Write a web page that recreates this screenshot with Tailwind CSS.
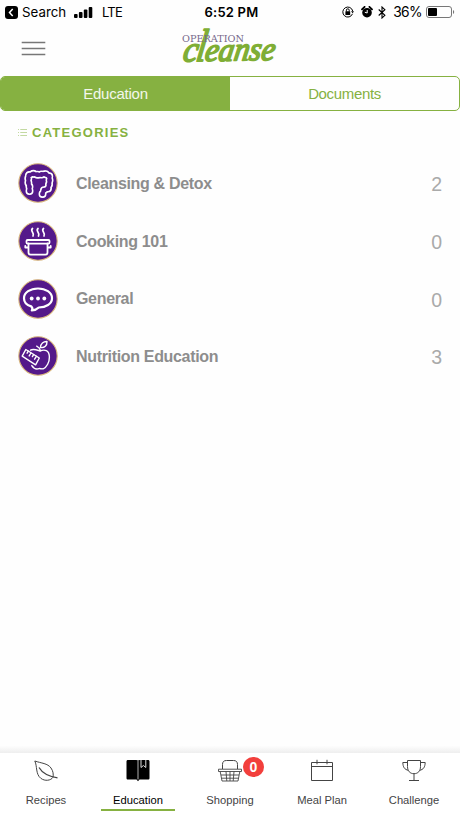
<!DOCTYPE html>
<html lang="en">

<head>
    <meta charset="UTF-8">
    <meta name="viewport" content="width=device-width, initial-scale=1.0">
    <title>Operation Cleanse - Education</title>
    <script src="https://cdn.jsdelivr.net/npm/@tailwindcss/browser@4"></script>
</head>

<body class="bg-[#fefefe] h-screen flex flex-col overflow-hidden font-['Liberation_Sans',sans-serif]">
    <!-- Status bar -->
    <div class="h-6 shrink-0 grid grid-cols-[1fr_auto_1fr] items-center pl-[5px] pr-[5px] text-black font-['Inter',sans-serif] text-[13.5px] leading-6">
        <div class="flex items-center">
            <svg class="w-[13px] h-[13px]" viewBox="0 0 13 13">
                <rect width="13" height="13" rx="3" />
                <path d="M7.7 3 4.5 6.5l3.2 3.5" fill="none" stroke="#fff" stroke-width="1.5" />
            </svg>
            <span class="ml-[4px] w-[44px] text-[13.3px] whitespace-nowrap">Search</span>
            <svg class="ml-[8px] w-[19px] h-[11px]" viewBox="0 0 19 11">
                <rect x="0" y="7" width="3.6" height="4" rx="1" />
                <rect x="4.9" y="5" width="3.6" height="6" rx="1" />
                <rect x="9.8" y="2.5" width="3.6" height="8.5" rx="1" />
                <rect x="14.7" y="0" width="3.6" height="11" rx="1" />
            </svg>
            <span class="ml-[9px] text-[13px] tracking-[-0.8px]">LTE</span>
        </div>
        <div class="font-semibold text-[13px] tracking-[0.2px] pl-[3px]">6:52 PM</div>
        <div class="flex items-center justify-end">
            <svg class="w-[12px] h-[12px]" viewBox="0 0 12 12" fill="none" stroke="#000">
                <path d="M10.5 7.8A5 5 0 1 1 10.7 5" stroke-width="1" />
                <path d="M9 5.2h3L10.6 7.3z" fill="#000" stroke="none" />
                <rect x="3.4" y="5.2" width="4.8" height="3.7" rx=".5" fill="#000" stroke="none" />
                <path d="M4.4 5.5V4.2a1.4 1.4 0 0 1 2.8 0v1.3" />
            </svg>
            <svg class="ml-[7px] w-[12px] h-[12px]" viewBox="0 0 12 12">
                <circle cx="6" cy="6.7" r="4.8" />
                <path d="M1 3.4 3.6.8M8.4.8 11 3.4" stroke="#000" stroke-width="1.8" stroke-linecap="round" />
                <path d="M6.2 4v3L3.8 6.2" fill="none" stroke="#fff" stroke-width="1" />
            </svg>
            <svg class="ml-[5px] w-[8px] h-[13px]" viewBox="0 0 8 13">
                <path d="m.7 3.5 6.2 5.8L4 12V1l2.9 2.7L.7 9.5" fill="none" stroke="#000" stroke-width="1.1" />
            </svg>
            <span class="ml-[7px] text-[13.8px] tracking-[-0.6px]">36%</span>
            <svg class="ml-[4px] w-[29px] h-[12px]" viewBox="0 0 29 12">
                <rect x=".5" y=".5" width="25" height="11" rx="2.5" fill="none" stroke="#777" />
                <rect x="2" y="2" width="9" height="8" rx="1" />
                <path d="M27 4c1.6.6 1.6 3.4 0 4z" fill="#777" />
            </svg>
        </div>
    </div>

    <!-- Header -->
    <div class="h-[52px] shrink-0 grid grid-cols-[1fr_96px_1fr]">
        <svg class="ml-[21px] mt-[16px] w-[25px] h-[17px]" viewBox="0 0 25 17">
            <path d="M.7 2.5h23.6M.7 8.5h23.6M.7 14.5h23.6" stroke="#777" stroke-width="1.6" />
        </svg>
        <svg class="w-[96px] h-[50px] overflow-visible" viewBox="0 0 96 50">
            <g transform="translate(0 37.5) rotate(-1) skewX(-10)" fill="#7fae35" stroke="#7fae35" stroke-width="1.7" stroke-linejoin="round" font-family="Liberation Serif, serif" font-style="italic">
                <text x="0" y="0" font-size="36" textLength="15" lengthAdjust="spacingAndGlyphs">c</text>
                <text x="13" y="0" font-size="46" textLength="10" lengthAdjust="spacingAndGlyphs">l</text>
                <text x="22" y="0" font-size="33" textLength="70" lengthAdjust="spacingAndGlyphs">eanse</text>
            </g>
            <text x="0" y="18" font-family="DejaVu Serif, serif" font-size="8.3" fill="#76688a" textLength="62" lengthAdjust="spacingAndGlyphs">OPERATION</text>
        </svg>
    </div>

    <!-- Tabs -->
    <div class="h-[35px] shrink-0 grid grid-cols-2 border border-[#86b141] rounded-[5px] overflow-hidden text-[15px] text-center leading-[34px]">
        <div class="bg-[#86b141] text-white/90"><span class="tracking-[-0.25px]">Education</span></div>
        <div class="text-[#86b141]"><span class="tracking-[-0.35px]">Documents</span></div>
    </div>

    <!-- Section title -->
    <div class="h-[44px] shrink-0 flex items-center pl-[18px] text-[#86b141]">
        <svg class="w-[9px] h-[9px] -mt-[2px]" viewBox="0 0 9 9">
            <path d="M0 1.5h1M2.3 1.5H9M0 4.5h1M2.3 4.5H9M0 7.5h1M2.3 7.5H9" stroke="#a9c879" stroke-width=".7" />
        </svg>
        <h2 class="ml-[5px] text-[13px] font-bold tracking-[1.25px]">CATEGORIES</h2>
    </div>

    <!-- Category list -->
    <div class="flex-1 flex flex-col text-[#8d8d8d]">
        <div class="h-[57.7px] flex items-center pl-[18px] pr-[18px]">
            <svg class="w-[40px] h-[40px] -mt-px" viewBox="0 0 40 40">
                <circle cx="20" cy="20" r="19.2" fill="#54198a" stroke="#d8b67c" stroke-width="1.1" />
                <g fill="none" stroke-linecap="round" stroke-linejoin="round">
                    <path d="M11.500 28V24L10.300 19.500V12.500L15 10.800 21 12 27 10.800 31.500 13.500V19.500L30 25.500 25.500 27.500 24.500 31" stroke="#fff" stroke-width="8" stroke-dasharray="0 4.200" />
                    <path d="M11.500 28V24L10.300 19.500V12.500L15 10.800 21 12 27 10.800 31.500 13.500V19.500L30 25.500 25.500 27.500 24.500 31" stroke="#fff" stroke-width="6.800" />
                    <path d="M11.500 28V24L10.300 19.500V12.500L15 10.800 21 12 27 10.800 31.500 13.500V19.500L30 25.500 25.500 27.500 24.500 31" stroke="#54198a" stroke-width="3.800" />
                    <path d="M11.500 28V24L10.300 19.500V12.500L15 10.800 21 12 27 10.800 31.500 13.500V19.500L30 25.500 25.500 27.500 24.500 31" stroke="#54198a" stroke-width="4.800" stroke-dasharray="0 4.200" />
                </g>
            </svg>
            <span class="ml-[18px] flex-1 font-bold text-[16px] tracking-[-0.33px]">Cleansing &amp; Detox</span>
            <span class="text-[19.5px] text-[#aaa] pt-[2px]">2</span>
        </div>
        <div class="h-[57.7px] flex items-center pl-[18px] pr-[18px]">
            <svg class="w-[40px] h-[40px] -mt-px" viewBox="0 0 40 40">
                <circle cx="20" cy="20" r="19.2" fill="#54198a" stroke="#d8b67c" stroke-width="1.1" />
                <g fill="none" stroke="#fff" stroke-width="1.8" stroke-linejoin="round" stroke-linecap="round">
                    <path d="M14.5 7.500c-3 2.500 2.500 4 .5 7.500M20 7.500c-3 2.500 2.500 4 .5 7.500M25.500 7.500c-3 2.500 2.500 4 .5 7.500" stroke-width="1.7" />
                    <rect x="8.5" y="19" width="23" height="3.600" rx="1" />
                    <path d="M10.500 22.500v9c0 1.400.8 2.200 2.200 2.200h14.600c1.400 0 2.200-.8 2.200-2.200v-9M10.500 26.500H7.300V25M29.500 26.500h3.200V25" />
                </g>
            </svg>
            <span class="ml-[18px] flex-1 font-bold text-[16px] tracking-[-0.33px]">Cooking 101</span>
            <span class="text-[19.5px] text-[#aaa] pt-[2px]">0</span>
        </div>
        <div class="h-[57.7px] flex items-center pl-[18px] pr-[18px]">
            <svg class="w-[40px] h-[40px] -mt-px" viewBox="0 0 40 40">
                <circle cx="20" cy="20" r="19.2" fill="#54198a" stroke="#d8b67c" stroke-width="1.1" />
                <path d="M13.2 27.400C8.400 26 6 23 6 19.200c0-5.700 6.200-9.700 14-9.700s14 4 14 9.700-6.200 9.300-13.200 9.300c-2 2-4.200 2.800-7 3 1-1.300 1-2.500-.6-4.100z" fill="none" stroke="#fff" stroke-width="2.200" stroke-linejoin="round" />
                <g fill="#fff">
                    <circle cx="13.7" cy="19.500" r="1.9" />
                    <circle cx="20" cy="19.500" r="1.9" />
                    <circle cx="26.3" cy="19.500" r="1.9" />
                </g>
            </svg>
            <span class="ml-[18px] flex-1 font-bold text-[16px] tracking-[-0.33px]">General</span>
            <span class="text-[19.5px] text-[#aaa] pt-[2px]">0</span>
        </div>
        <div class="h-[57.7px] flex items-center pl-[18px] pr-[18px]">
            <svg class="w-[40px] h-[40px] -mt-px" viewBox="0 0 40 40">
                <circle cx="20" cy="20" r="19.2" fill="#54198a" stroke="#d8b67c" stroke-width="1.1" />
                <g fill="none" stroke="#fff" stroke-width="1.4" stroke-linejoin="round" stroke-linecap="round">
                    <path d="M22.400 14.500c-.5-2-1.500-3.500-3.700-4.400M22.500 11.500c0-4 3-6.200 6.500-6 .2 4-2.500 6.700-6.500 6z" />
                    <path d="M12.500 14.200c2.800-1.800 5.500-.5 9.500.8 4.500-1.800 9.200-1.100 9.400 6 .1 5-2.700 10.500-6.200 11.800-2 .5-2.600-.5-4.200-.2-2.400.9-5 .3-7.200-3" />
                    <path d="m7.800 13.500 13.500 8.500-3.700 6.800L4.200 20.200z" />
                    <path d="m10.300 15.200-1.200 2M13 17l-1.800 2.900M15.600 18.600l-1.200 2M18.400 20.300l-1.800 2.900" />
                </g>
            </svg>
            <span class="ml-[18px] flex-1 font-bold text-[16px] tracking-[-0.33px]">Nutrition Education</span>
            <span class="text-[19.5px] text-[#aaa] pt-[2px]">3</span>
        </div>
    </div>

    <!-- Bottom navigation -->
    <div class="h-[7px] shrink-0 bg-linear-to-b from-[#fdfdfd] to-[#eeeeee]"></div>
    <div class="h-[65px] shrink-0 grid grid-cols-5 bg-white text-[11.2px] text-[#444] text-center">
        <div class="flex flex-col items-center pt-[6px]">
            <svg class="w-[24px] h-[24px]" viewBox="0 0 24 24" fill="none" stroke="#444">
                <path d="M.8 2c6.5 2.300 12.800 2.200 16.200 7 2.300 3.200 2.500 6.500 2 9.300-2.200 3.300-8 4.200-12.200 1C1.400 15 3.400 7.200.8 2z" />
                <path d="M5 8.500c3.500 6 9 8.800 18.500 10.300" stroke-width="1.300" />
            </svg>
            <span class="mt-[9px] leading-4">Recipes</span>
        </div>
        <div class="flex flex-col items-center pt-[6px] text-black">
            <svg class="w-[24px] h-[24px]" viewBox="0 0 24 24">
                <path d="M2 1h8.200c.9 0 1.500.3 1.800.8.300-.5.900-.8 1.800-.8H22c1 0 1.500.5 1.500 1.500V19c0 1-.5 1.500-1.500 1.500h-8.500L12 22.300l-1.500-1.800H2C1 20.500.5 20 .5 19V2.500C.5 1.500 1 1 2 1z" />
                <path d="M12 2v18.500" stroke="#ddd" stroke-width=".8" />
                <path d="M15 1v7.500l2.400-2 2.400 2V1" fill="none" stroke="#ddd" stroke-width="1" />
            </svg>
            <span class="mt-[9px] leading-4">Education</span>
            <div class="mt-[1px] w-[74px] h-[2px] bg-[#86b141]"></div>
        </div>
        <div class="relative flex flex-col items-center pt-[6px]">
            <svg class="w-[24px] h-[24px]" viewBox="0 0 24 24" fill="none" stroke="#444">
                <path d="M4.500 10V5.500c0-2.700 1.300-4 4-4h7c2.700 0 4 1.300 4 4V10" />
                <path d="M.5 10.200h23v2.300H.5zM2.200 12.500 4 22h16l1.800-9.500M3 16h18M3.600 19.200h16.800M8 12.500l.8 9.500M12 12.500V22M16 12.500l-.8 9.500" stroke-width=".9" />
            </svg>
            <span class="mt-[9px] leading-4">Shopping</span>
            <span class="absolute left-[59px] top-[4px] w-[21px] h-[20px] rounded-full bg-[#f23f3c] text-white font-bold text-[14px] leading-5">0</span>
        </div>
        <div class="flex flex-col items-center pt-[6px]">
            <svg class="w-[24px] h-[24px]" viewBox="0 0 24 24" fill="none" stroke="#444">
                <path d="M1.500 3.500h21v18h-21zM1.500 7.500h21M7 .8v4.500M17 .8v4.500" />
            </svg>
            <span class="mt-[9px] leading-4">Meal Plan</span>
        </div>
        <div class="flex flex-col items-center pt-[6px]">
            <svg class="w-[24px] h-[24px]" viewBox="0 0 24 24" fill="none" stroke="#444">
                <path d="M5.500 1.500h13v6c0 4.500-2.500 7.200-6.500 7.200S5.500 12 5.500 7.500zM5.500 3.500H.8c.2 4.700 1.700 7 5.500 7.800M18.500 3.500h4.700c-.2 4.700-1.700 7-5.500 7.800M12 14.700v7M7 21.500h10" />
            </svg>
            <span class="mt-[9px] leading-4">Challenge</span>
        </div>
    </div>
</body>

</html>
